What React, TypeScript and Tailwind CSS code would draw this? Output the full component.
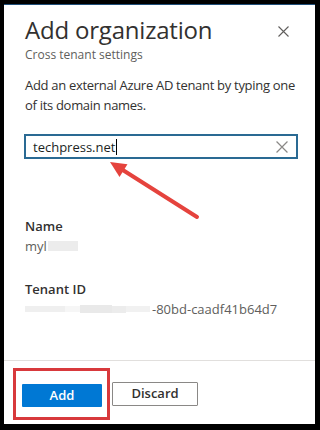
import { useState } from 'react';

const font = { fontFamily: '"Open Sans", "Noto Sans", sans-serif' };

function XMark({ size = 11, color = '#605e5c' }: { size?: number; color?: string }) {
  return (
    <svg width={size} height={size} viewBox="0 0 11 11" fill="none">
      <path d="M0.5 0.5L10.5 10.5M10.5 0.5L0.5 10.5" stroke={color} strokeWidth="1.1" />
    </svg>
  );
}

export default function App() {
  const [domain, setDomain] = useState('techpress.net');

  return (
    <div className="relative w-[320px] h-[430px] bg-black pt-[4px] pl-[4px] pr-[5px] pb-[6px]" style={font}>
      <div className="flex flex-col h-full bg-white border-t border-[#1f4e79] text-[#323130]">
        <div className="pl-[21px] pr-[10px] pt-[9px]">
          {/* header */}
          <div className="flex items-start justify-between">
            <h2 className="text-[24px] leading-[32px] font-normal tracking-[-0.2px]">Add organization</h2>
            <button type="button" className="mt-[12px] mr-[16px]"><XMark /></button>
          </div>
          <p className="text-[12px] leading-[16px] text-[#605e5c] mt-[1px]">Cross tenant settings</p>

          <p className="mt-[12px] w-[280px] text-[13px] leading-[20px] tracking-[-0.3px]">
            Add an external Azure AD tenant by typing one of its domain names.
          </p>

          {/* domain input */}
          <div className="mt-[19px] flex items-center w-[274px] h-[25px] -ml-[1px] border-2 border-[#2a6a93] pl-[7px] pr-[8px]">
            <span className="text-[13px] leading-[18px] text-[#201f1e]">{domain}</span>
            <span className="w-px h-[16px] bg-black ml-[1px]" />
            <span className="flex-1" />
            <button type="button" onClick={() => setDomain('')}><XMark size={12} color="#8a8886" /></button>
          </div>

          {/* details */}
          <div className="mt-[57px]">
            <div className="text-[13px] leading-[20px] font-semibold">Name</div>
            <div className="flex items-center text-[13px] leading-[20px] text-[#605e5c]">
              myl
              <span className="ml-[1px] w-[30px] h-[10px] bg-[#ececec]" />
            </div>
          </div>
          <div className="mt-[23px]">
            <div className="text-[13px] leading-[20px] font-semibold">Tenant ID</div>
            <div className="flex items-center text-[13px] leading-[20px] text-[#605e5c]">
              <span className="w-[40px] h-[6px] bg-[#efefef]" />
              <span className="w-[15px] h-[6px] bg-[#f6f6f6]" />
              <span className="w-[32px] h-[8px] bg-[#e9e9e9]" />
              <span className="w-[14px] h-[7px] bg-[#ececec]" />
              <span className="w-[24px] h-[6px] bg-[#f1f1f1] mr-[2px]" />
              -80bd-caadf41b64d7
            </div>
          </div>
        </div>

        {/* footer */}
        <div className="mt-auto border-t border-[#e1dfdd] pt-[7px] pb-[4px] pl-[9px] flex items-center">
          <div className="border-[3px] border-[#d8393c] pt-[11px] pb-[10px] pl-[6px] pr-[5px]">
            <button type="button" className="w-[80px] h-[23px] bg-[#0078d4] text-white text-[13px] font-semibold rounded-[1px]">
              Add
            </button>
          </div>
          <button type="button" className="ml-[2px] w-[86px] h-[24px] border border-[#8a8886] text-[13px] font-semibold text-[#323130] rounded-[1px]">
            Discard
          </button>
        </div>
      </div>

      {/* annotation arrow */}
      <svg className="absolute inset-0 pointer-events-none" width="320" height="430">
        <line x1="197" y1="217" x2="122" y2="169.5" stroke="#e5433d" strokeWidth="4" strokeLinecap="round" />
        <polygon points="110,162 127.5,164.3 119.5,177" fill="#e5433d" />
      </svg>
    </div>
  );
}
